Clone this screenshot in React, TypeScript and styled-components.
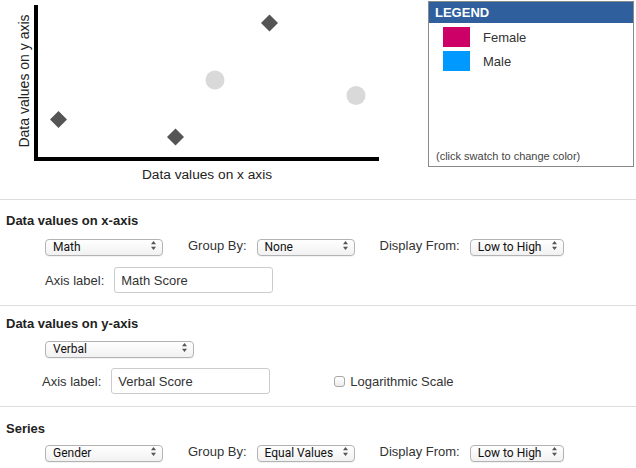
import styled, { createGlobalStyle } from 'styled-components';

const GlobalStyle = createGlobalStyle`
  html, body {
    margin: 0;
    padding: 0;
    background: #ffffff;
  }
  body {
    font-family: "Liberation Sans", Arial, sans-serif;
    color: #333333;
  }
`;

const Page = styled.div`
  width: 636px;
`;

const TopArea = styled.div`
  display: flex;
  height: 199px;
`;

const Chart = styled.svg`
  width: 400px;
  height: 199px;
  flex-shrink: 0;
`;

const Legend = styled.div`
  margin: 1px 0 0 28px;
  width: 204px;
  height: 164px;
  border: 1px solid #8a8a8a;
  display: flex;
  flex-direction: column;
`;

const LegendHeader = styled.div`
  height: 21px;
  background: #2f5f9c;
  color: #ffffff;
  font-weight: bold;
  font-size: 13px;
  line-height: 22px;
  padding-left: 6px;
`;

const LegendList = styled.div`
  flex: 1;
  padding: 4px 0 0 14px;
  display: flex;
  flex-direction: column;
  gap: 4px;
`;

const LegendRow = styled.div`
  display: flex;
  align-items: center;
  height: 20px;
  font-size: 13px;
  color: #333;
`;

const Swatch = styled.div<{ $color: string }>`
  width: 27px;
  height: 20px;
  background: ${(p) => p.$color};
  margin-right: 13px;
  cursor: pointer;
`;

const LegendNote = styled.div`
  font-size: 11px;
  color: #444;
  padding: 0 0 4px 7px;
`;

const Section = styled.div<{ $top: number }>`
  border-top: 1px solid #dddddd;
  padding: ${(p) => p.$top}px 0 12px 6px;
`;

const Title = styled.div`
  font-weight: bold;
  font-size: 13px;
  line-height: 16px;
  color: #222;
`;

const Row = styled.div<{ $indent: number; $mt: number }>`
  display: flex;
  align-items: center;
  margin-left: ${(p) => p.$indent}px;
  margin-top: ${(p) => p.$mt}px;
`;

const Label = styled.span<{ $ml?: number }>`
  font-size: 13px;
  color: #333;
  margin-left: ${(p) => p.$ml ?? 0}px;
  margin-right: 10px;
`;

const SelectWrap = styled.div<{ $w: number }>`
  position: relative;
  width: ${(p) => p.$w}px;
  height: 17px;
`;

const Select = styled.select`
  appearance: none;
  -webkit-appearance: none;
  width: 100%;
  height: 17px;
  margin: 0;
  padding: 0 0 0 7px;
  border: 1px solid #b3b3b3;
  border-radius: 4px;
  background: linear-gradient(#ffffff, #f1f1f1);
  font-family: Roboto, "Liberation Sans", sans-serif;
  font-weight: 400;
  font-size: 12px;
  color: #111;
  line-height: 15px;
  box-shadow: 0 1px 0 rgba(0, 0, 0, 0.05);
`;

const Arrows = styled.svg`
  position: absolute;
  right: 7px;
  top: 4px;
  width: 5px;
  height: 9px;
  pointer-events: none;
`;

const TextInput = styled.input<{ $w: number }>`
  width: ${(p) => p.$w}px;
  height: 26px;
  box-sizing: border-box;
  border: 1px solid #cccccc;
  border-radius: 3px;
  padding: 0 0 0 6px;
  font-family: "Liberation Sans", Arial, sans-serif;
  font-size: 13px;
  color: #333;
  margin: 0;
`;

const CheckLabel = styled.label`
  display: flex;
  align-items: center;
  margin-left: 64px;
  font-size: 13px;
  color: #333;
`;

const Check = styled.input`
  appearance: none;
  -webkit-appearance: none;
  width: 11px;
  height: 11px;
  margin: 0 5px 0 0;
  border: 1px solid #a8a8a8;
  border-radius: 3px;
  background: linear-gradient(#ffffff, #ececec);
`;

const Dropdown = ({ w, value, options }: { w: number; value: string; options: string[] }) => (
  <SelectWrap $w={w}>
    <Select defaultValue={value}>
      {options.map((o) => (
        <option key={o}>{o}</option>
      ))}
    </Select>
    <Arrows viewBox="0 0 5 9">
      <path d="M2.5 0 L5 3.2 L0 3.2 Z M0 5.8 L5 5.8 L2.5 9 Z" fill="#555" />
    </Arrows>
  </SelectWrap>
);

const ScatterChart = () => (
  <Chart viewBox="0 0 400 199">
    <rect x="34" y="5" width="4" height="156" fill="#000" />
    <rect x="34" y="157" width="345" height="4" fill="#000" />
    <text
      x="24"
      y="81"
      transform="rotate(-90 24 81)"
      textAnchor="middle"
      dominantBaseline="central"
      fontFamily="Liberation Sans, Arial, sans-serif"
      fontSize="14"
      fill="#222"
    >
      Data values on y axis
    </text>
    <text
      x="207"
      y="174"
      textAnchor="middle"
      dominantBaseline="central"
      fontFamily="Liberation Sans, Arial, sans-serif"
      fontSize="13.7"
      fill="#222"
    >
      Data values on x axis
    </text>
    <circle cx="215" cy="80" r="9.5" fill="#d9d9d9" />
    <circle cx="356" cy="95.5" r="9.5" fill="#d9d9d9" />
    {[
      [58.5, 119.5],
      [175.5, 137],
      [269.5, 23],
    ].map(([x, y]) => (
      <path key={x} d={`M${x} ${y - 8.5} L${x + 8.5} ${y} L${x} ${y + 8.5} L${x - 8.5} ${y} Z`} fill="#555" />
    ))}
  </Chart>
);

const App = () => {
  return (
    <Page>
      <GlobalStyle />
      <TopArea>
        <ScatterChart />
        <Legend>
          <LegendHeader>LEGEND</LegendHeader>
          <LegendList>
            <LegendRow>
              <Swatch $color="#cc0066" />
              Female
            </LegendRow>
            <LegendRow>
              <Swatch $color="#0099ff" />
              Male
            </LegendRow>
          </LegendList>
          <LegendNote>(click swatch to change color)</LegendNote>
        </Legend>
      </TopArea>

      <Section $top={13}>
        <Title>Data values on x-axis</Title>
        <Row $indent={39} $mt={8}>
          <Dropdown w={118} value="Math" options={['Math', 'Verbal', 'Gender']} />
          <Label $ml={25}>Group By:</Label>
          <Dropdown w={98} value="None" options={['None', 'Equal Values']} />
          <Label $ml={25}>Display From:</Label>
          <Dropdown w={94} value="Low to High" options={['Low to High', 'High to Low']} />
        </Row>
        <Row $indent={39} $mt={13}>
          <Label>Axis label:</Label>
          <TextInput $w={159} defaultValue="Math Score" />
        </Row>
      </Section>

      <Section $top={10}>
        <Title>Data values on y-axis</Title>
        <Row $indent={39} $mt={7}>
          <Dropdown w={149} value="Verbal" options={['Math', 'Verbal', 'Gender']} />
        </Row>
        <Row $indent={36} $mt={12}>
          <Label>Axis label:</Label>
          <TextInput $w={159} defaultValue="Verbal Score" />
          <CheckLabel>
            <Check type="checkbox" />
            Logarithmic Scale
          </CheckLabel>
        </Row>
      </Section>

      <Section $top={14}>
        <Title>Series</Title>
        <Row $indent={39} $mt={6}>
          <Dropdown w={118} value="Gender" options={['Math', 'Verbal', 'Gender']} />
          <Label $ml={25}>Group By:</Label>
          <Dropdown w={98} value="Equal Values" options={['None', 'Equal Values']} />
          <Label $ml={25}>Display From:</Label>
          <Dropdown w={94} value="Low to High" options={['Low to High', 'High to Low']} />
        </Row>
      </Section>
    </Page>
  );
};

export default App;
